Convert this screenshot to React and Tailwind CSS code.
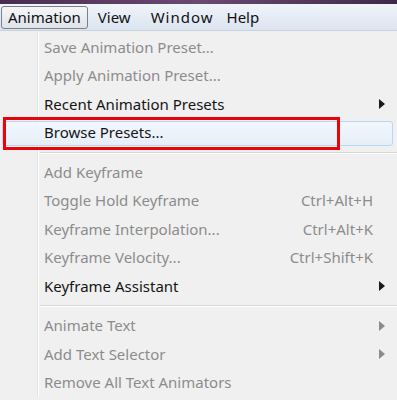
import React from "react";

const Arrow = ({ dim }) => (
  <svg width="6" height="10" viewBox="0 0 6 10" className="block">
    <path d="M0 0 L6 5 L0 10 Z" fill={dim ? "#8a8a8a" : "#1a1a1a"} />
  </svg>
);

const Item = ({ label, shortcut, arrow, disabled, highlight }) => (
  <div className="relative h-[28.5px] flex items-center">
    {highlight && (
      <div className="absolute left-[2px] right-[4px] top-[2px] bottom-[1px] rounded-[3px] border border-[#b8d6f5] bg-gradient-to-b from-[#f2f7fd] to-[#e6eef8]" />
    )}
    <span className={`relative pl-[44px] ${disabled ? "text-[#8c8c8c]" : "text-[#151515]"}`}>{label}</span>
    <span className="flex-1" />
    {shortcut && <span className="relative text-[#8c8c8c] pr-[24px]">{shortcut}</span>}
    {arrow && (
      <span className="relative pr-[12px]">
        <Arrow dim={disabled} />
      </span>
    )}
  </div>
);

const Sep = () => (
  <div className="h-[11px] flex flex-col justify-center pl-[40px]">
    <div className="h-px bg-[#d7d7d7]" />
    <div className="h-px bg-white" />
  </div>
);

export default function App() {
  return (
    <div className="w-[397px] h-[400px] overflow-hidden bg-[#f0f0f0] text-[15px] leading-none" style={{ fontFamily: "'Noto Sans', 'Open Sans', sans-serif" }}>
      <div className="h-[4px] bg-gradient-to-r from-[#4a2c52] via-[#6a4a72] to-[#3e2a48]" />
      <div className="h-[27px] bg-gradient-to-b from-[#f0f4fa] to-[#dbe4f0] flex items-center border-b border-[#c8d2de]">
        <div className="ml-[1px] h-[23px] px-[6px] flex items-center rounded-[3px] border border-[#7c7f86] bg-gradient-to-b from-[#f4f6f9] to-[#dfe4ea] text-[#111]">Animation</div>
        <div className="ml-[10px] text-[#111]">View</div>
        <div className="ml-[20px] text-[#111] tracking-[1px]">Window</div>
        <div className="ml-[13px] text-[#111]">Help</div>
      </div>
      <div className="relative pt-[2px]">
        <div className="absolute left-[37px] top-0 bottom-0 w-px bg-[#e2e3e3]" />
        <div className="absolute left-[38px] top-0 bottom-0 w-px bg-white" />
        <Item label="Save Animation Preset..." disabled />
        <Item label="Apply Animation Preset..." disabled />
        <Item label="Recent Animation Presets" arrow />
        <div className="relative">
          <Item label="Browse Presets..." highlight />
          <div className="absolute left-[3px] top-[-2px] w-[337px] h-[33px] border-[3px] border-[#e8050a]" />
        </div>
        <Sep />
        <Item label="Add Keyframe" disabled />
        <Item label="Toggle Hold Keyframe" shortcut="Ctrl+Alt+H" disabled />
        <Item label="Keyframe Interpolation..." shortcut="Ctrl+Alt+K" disabled />
        <Item label="Keyframe Velocity..." shortcut="Ctrl+Shift+K" disabled />
        <Item label="Keyframe Assistant" arrow />
        <Sep />
        <Item label="Animate Text" arrow disabled />
        <Item label="Add Text Selector" arrow disabled />
        <Item label="Remove All Text Animators" disabled />
      </div>
    </div>
  );
}
